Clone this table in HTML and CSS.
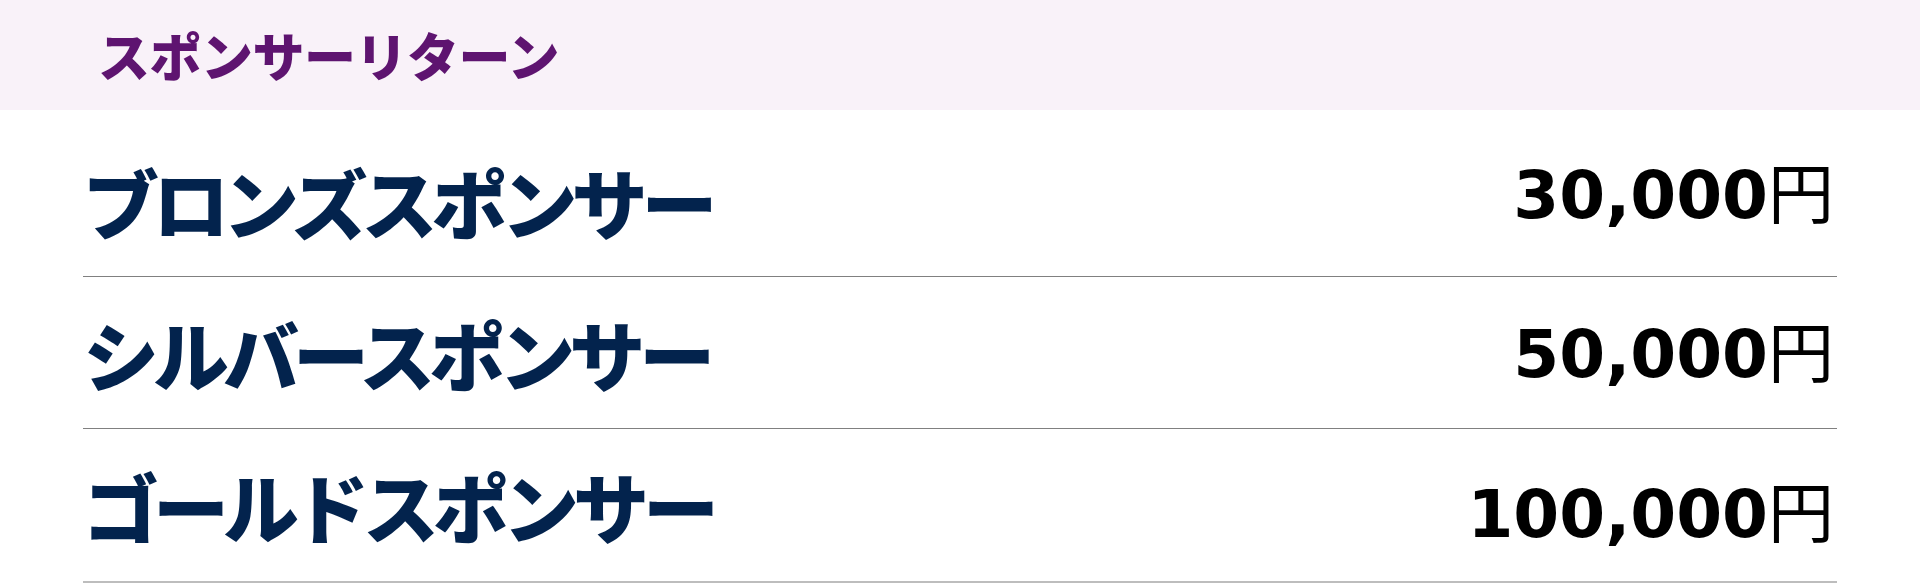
FILE: index.html
```html
<!DOCTYPE html>
<html lang="ja">
<head>
<meta charset="utf-8">
<link rel="stylesheet" href="styles.css">
</head>
<body>
<header class="band">
  <div class="wrap">
    <h2 class="title">スポンサーリターン</h2>
  </div>
</header>
<main class="wrap list">
  <div class="row">
    <span class="label">ブロンズスポンサー</span>
    <span class="price">30,000<span class="yen">円</span></span>
  </div>
  <div class="row">
    <span class="label">シルバースポンサー</span>
    <span class="price">50,000<span class="yen">円</span></span>
  </div>
  <div class="row">
    <span class="label">ゴールドスポンサー</span>
    <span class="price">100,000<span class="yen">円</span></span>
  </div>
</main>
</body>
</html>
```
FILE: styles.css
```css
html, body {
  margin: 0;
  padding: 0;
  background: #ffffff;
}
body {
  font-family: "Noto Sans CJK JP", "Noto Sans", sans-serif;
}
.wrap {
  width: 1754px;
  margin: 0 auto;
}
.band {
  background: #f9f2f9;
  height: 110px;
  display: flex;
  align-items: center;
}
.title {
  margin: 0;
  padding-left: 15px;
  font-size: 52px;
  line-height: 1;
  font-weight: 900;
  letter-spacing: -0.5px;
  color: #5e1470;
}
.list {
  padding-top: 15px;
}
.row {
  display: flex;
  justify-content: space-between;
  align-items: flex-start;
  height: 151px;
  border-bottom: 1px solid #808080;
}
.row:last-child {
  height: 152px;
  border-bottom: 2px solid #bdbdbd;
}
.label {
  align-self: center;
  font-size: 76px;
  font-weight: 900;
  letter-spacing: -6px;
  color: #03234d;
  line-height: 1;
}
.price {
  margin-top: 31px;
  padding-right: 3px;
  font-family: "DejaVu Sans", "Noto Sans CJK JP", sans-serif;
  font-size: 66px;
  font-weight: 700;
  color: #000;
  line-height: 1;
}
.row:nth-child(2) .price {
  margin-top: 38px;
}
.row:nth-child(3) .price {
  margin-top: 46px;
}
.yen {
  font-family: "Noto Sans CJK JP", sans-serif;
  font-weight: 400;
}
```
